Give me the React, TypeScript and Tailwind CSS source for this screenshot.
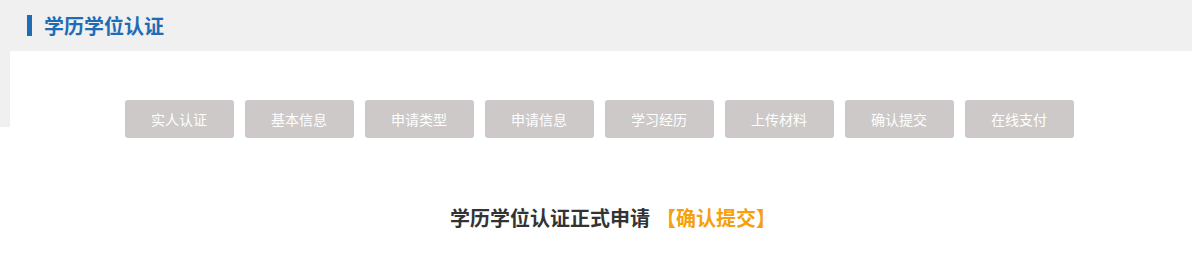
import React from 'react';

const steps = ['实人认证', '基本信息', '申请类型', '申请信息', '学习经历', '上传材料', '确认提交', '在线支付'];

const font = { fontFamily: '"Microsoft YaHei", "Noto Sans CJK SC", sans-serif' };

export default function App() {
  return (
    <div className="min-h-[278px] bg-white" style={font}>
      <div className="h-[127px] bg-[#f0f0f0] pl-[10px]">
        <div className="-ml-[10px] flex h-[51px] items-center pl-[27px]">
          <span className="h-[21px] w-[5px] bg-[#1e6cb6]" />
          <h1 className="ml-[12px] text-[20px] font-bold leading-none text-[#1e6cb6]">学历学位认证</h1>
        </div>
        <div className="bg-white">
          <div className="flex justify-center gap-[11px] pr-[4px] pt-[49px]">
            {steps.map((s) => (
              <div
                key={s}
                className="flex h-[38px] w-[109px] items-center justify-center rounded-[3px] bg-[#ccc9c8] text-[14px] text-white"
              >
                {s}
              </div>
            ))}
          </div>
          <div className="flex items-center justify-center pl-[24px] pt-[70px] pb-[40px] text-[20px] font-bold leading-none">
            <span className="text-[#333333]">学历学位认证正式申请</span>
            <span className="ml-[6px] text-[#f5a00c]">【确认提交】</span>
          </div>
        </div>
      </div>
    </div>
  );
}
